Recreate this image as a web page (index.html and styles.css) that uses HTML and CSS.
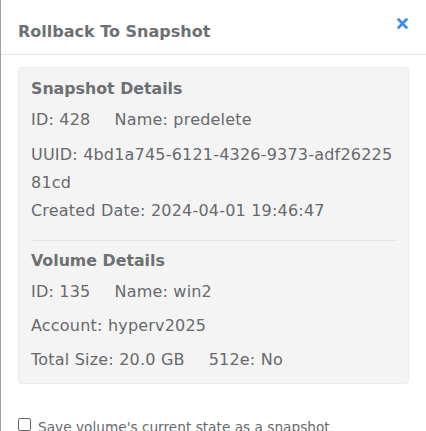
FILE: index.html
```html
<!DOCTYPE html>
<html>
<head>
<meta charset="utf-8">
<link rel="stylesheet" href="styles.css">
</head>
<body>
<div class="modal">
  <div class="header">
    <h3 class="title">Rollback To Snapshot</h3>
    <span class="close"><svg width="11" height="11" viewBox="0 0 11 11"><path d="M1.6 1.6L9.4 9.4M9.4 1.6L1.6 9.4" stroke="#3d8ee8" stroke-width="2.8" stroke-linecap="round"/></svg></span>
  </div>
  <div class="body">
    <div class="panel">
      <h4 class="section">Snapshot Details</h4>
      <p class="line first"><span class="pair">ID: 428</span><span>Name: predelete</span></p>
      <p class="line wide">UUID: 4bd1a745-6121-4326-9373-adf2622581cd<br>Created Date: 2024-04-01 19:46:47</p>
      <hr class="sep">
      <h4 class="section">Volume Details</h4>
      <p class="line first"><span class="pair">ID: 135</span><span>Name: win2</span></p>
      <p class="line">Account: hyperv2025</p>
      <p class="line"><span class="pair">Total Size: 20.0 GB</span><span>512e: No</span></p>
    </div>
    <label class="check"><span class="box"></span>Save volume's current state as a snapshot</label>
  </div>
</div>
</body>
</html>
```
FILE: styles.css
```css
html, body { margin: 0; padding: 0; background: #fff; }
body { font-family: "DejaVu Sans", Verdana, sans-serif; color: #67696c; overflow: hidden; height: 431px; }
.modal { border-left: 1px solid #a0a0a0; height: 431px; box-sizing: border-box; }
.header { display: flex; align-items: flex-start; justify-content: space-between; height: 54px; border-bottom: 1px solid #e5e5e5; padding: 0 18px 0 17px; }
.title { margin: 22px 0 0; font-size: 16px; font-weight: bold; color: #6d7073; line-height: 20px; }
.close { margin-top: 18px; display: flex; }
.body { padding: 12px 17px 0 17px; }
.panel { background: #f4f4f4; border: 1px solid #ebebeb; border-radius: 4px; padding: 7px 11px 9px 12px; }
.section { margin: 0; font-size: 15.8px; font-weight: bold; color: #6d7073; line-height: 28px; }
.line { margin: 6px 0 0; font-size: 16px; letter-spacing: 0.2px; line-height: 28px; word-break: break-all; }
.line.first { margin-top: 3px; }
.line.wide { margin-top: 7px; }
.pair { margin-right: 24px; }
.sep { border: 0; border-top: 1px solid #e6e6e6; margin: 15px 0 6px; }
.check { display: flex; align-items: flex-start; margin-top: 33px; font-size: 13.7px; line-height: 20px; }
.box { width: 11px; height: 11px; border: 1px solid #666; border-radius: 2px; margin: 1px 7px 0 0; background: #fff; flex: none; }
```
